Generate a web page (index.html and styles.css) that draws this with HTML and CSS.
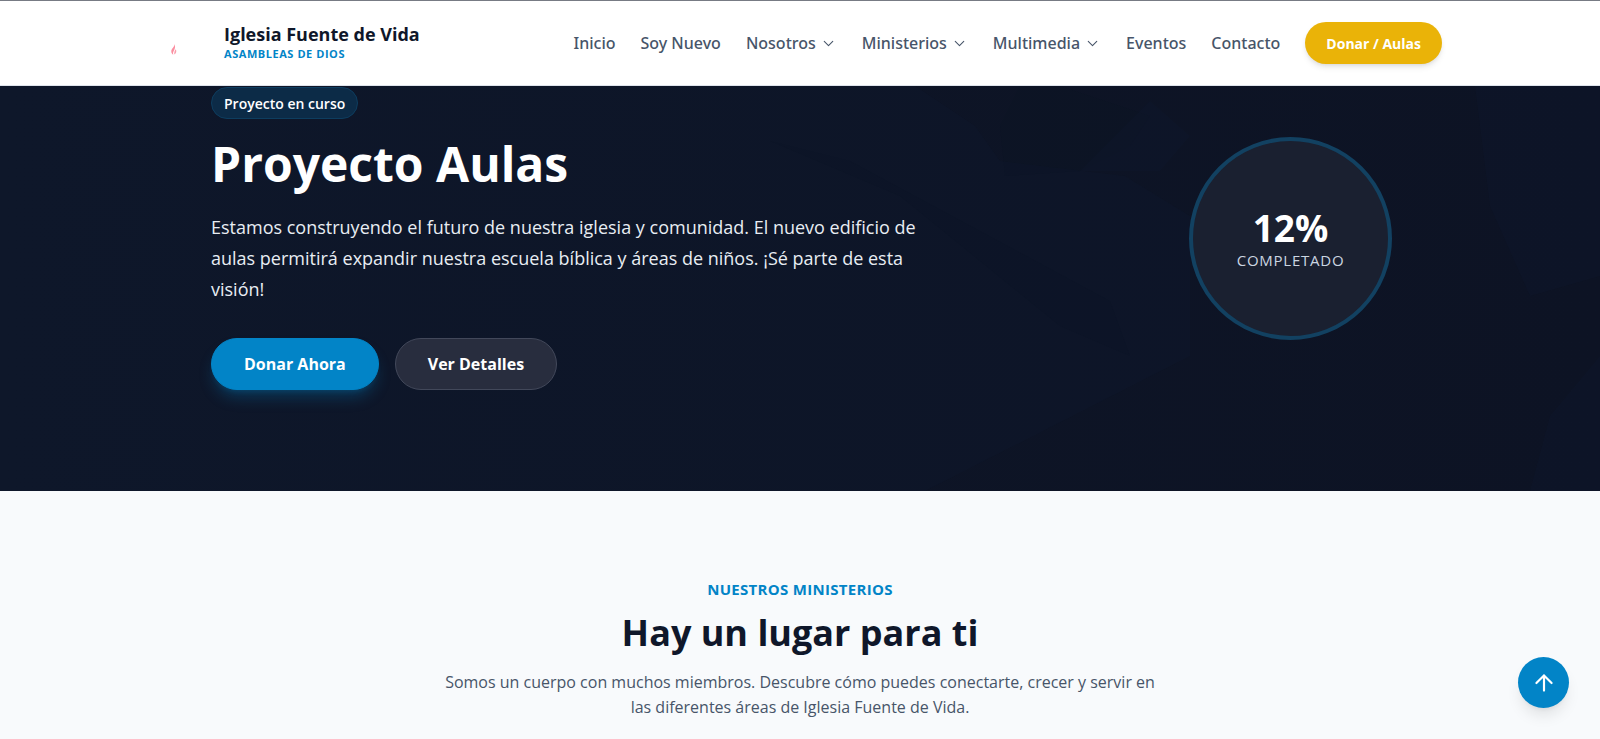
FILE: index.html
```html
<!DOCTYPE html>
<html lang="es">
<head>
<meta charset="utf-8">
<meta name="viewport" content="width=device-width, initial-scale=1">
<title>Iglesia Fuente de Vida</title>
<link rel="stylesheet" href="styles.css">
</head>
<body>
<header class="site-header">
  <div class="header-inner">
    <a class="brand" href="#">
      <svg class="brand-mark" viewBox="0 0 52 52" aria-hidden="true">
        <path d="M16.500 27c.5 2.800-3.400 4.600-3.200 7.500.1 1.700 1 2.800 2 3.200-.7-1.700-.1-3 .7-4.300 1.200-2 1.400-4.500.5-6.400z" fill="#fb8ea0"/>
        <path d="M17.600 32.200c1.300 1.500.9 4.300-1.400 5.300.3-1.800-.3-2.600 1.400-5.300z" fill="#fb9dac"/>
      </svg>
      <span class="brand-text">
        <span class="brand-name">Iglesia Fuente de Vida</span>
        <span class="brand-sub">ASAMBLEAS DE DIOS</span>
      </span>
    </a>
    <nav class="nav" aria-label="Principal">
      <a class="nav-link" href="#">Inicio</a>
      <a class="nav-link" href="#">Soy Nuevo</a>
      <button class="nav-link" type="button">Nosotros <svg class="chevron" viewBox="0 0 24 24" aria-hidden="true"><path d="m6 9 6 6 6-6"/></svg></button>
      <button class="nav-link" type="button">Ministerios <svg class="chevron" viewBox="0 0 24 24" aria-hidden="true"><path d="m6 9 6 6 6-6"/></svg></button>
      <button class="nav-link" type="button">Multimedia <svg class="chevron" viewBox="0 0 24 24" aria-hidden="true"><path d="m6 9 6 6 6-6"/></svg></button>
      <a class="nav-link" href="#">Eventos</a>
      <a class="nav-link" href="#">Contacto</a>
      <a class="donate" href="#">Donar / Aulas</a>
    </nav>
  </div>
</header>
<main>
  <section class="hero">
    <svg class="hero-art" viewBox="0 0 1600 405" preserveAspectRatio="xMidYMid slice" aria-hidden="true">
      <path class="art-light" d="M0 0H915L975 40L1000 75L1125 90L1190 130V270L925 405H0Z"/>
      <path class="art-dark" d="M770 55L850 75L1110 215L1130 270L1060 240L900 110Z"/>
      <path class="art-dark" d="M1000 40L1020 0H1060L1150 30L1130 60L1080 85L1005 90Z"/>
      <path class="art-light" d="M1080 85L1150 15L1190 50L1160 85Z"/>
      <path class="art-light" d="M1475 0H1600V190L1530 210L1490 120Z"/>
      <path class="art-light" d="M1600 270L1550 330L1530 405H1600Z"/>
    </svg>
    <div class="hero-inner">
      <div class="hero-copy">
        <span class="badge">Proyecto en curso</span>
        <h1 class="hero-title">Proyecto Aulas</h1>
        <p class="hero-text">Estamos construyendo el futuro de nuestra iglesia y comunidad. El nuevo edificio de aulas permitirá expandir nuestra escuela bíblica y áreas de niños. ¡Sé parte de esta visión!</p>
        <div class="actions">
          <a class="btn btn-primary" href="#">Donar Ahora</a>
          <a class="btn btn-ghost" href="#">Ver Detalles</a>
        </div>
      </div>
      <div class="progress">
        <span class="progress-value">12%</span>
        <span class="progress-label">COMPLETADO</span>
      </div>
    </div>
  </section>
  <section class="ministries">
    <p class="eyebrow">NUESTROS MINISTERIOS</p>
    <h2 class="section-title">Hay un lugar para ti</h2>
    <p class="section-text">Somos un cuerpo con muchos miembros. Descubre cómo puedes conectarte, crecer y servir en las diferentes áreas de Iglesia Fuente de Vida.</p>
  </section>
</main>
<button class="to-top" type="button" aria-label="Volver arriba">
  <svg class="to-top-icon" viewBox="0 0 24 24" aria-hidden="true"><path d="m5 12 7-7 7 7M12 19V5"/></svg>
</button>
</body>
</html>
```
FILE: styles.css
```css
*, *::before, *::after { box-sizing: border-box; }

body {
  margin: 0;
  background: #f8fafc;
  color: #0f172a;
  font-family: "Open Sans", "Noto Sans", sans-serif;
}

h1, h2, p { margin: 0; }
a { color: inherit; text-decoration: none; }
button { border: 0; background: none; padding: 0; font: inherit; cursor: pointer; }

.site-header {
  background: #fff;
  border-top: 1px solid #777b84;
  border-bottom: 1px solid #dfe4ec;
}

.header-inner {
  display: flex;
  align-items: center;
  justify-content: space-between;
  max-width: 1284px;
  min-height: 84px;
  margin: 0 auto;
}

.brand { display: flex; align-items: center; gap: 14px; }
.brand-mark { width: 52px; height: 52px; }
.brand-text { display: flex; flex-direction: column; padding-bottom: 3px; }
.brand-name { font-size: 18px; font-weight: 700; line-height: 24px; }
.brand-sub {
  color: #0284c7;
  font-size: 11px;
  font-weight: 700;
  letter-spacing: 0.05em;
  line-height: 16px;
}

.nav { display: flex; align-items: center; gap: 25px; }
.nav-link {
  display: flex;
  align-items: center;
  gap: 4px;
  color: #475569;
  font-family: "Noto Sans", "Open Sans", sans-serif;
  font-size: 16px;
  font-weight: 500;
  line-height: 24px;
}

.chevron {
  width: 17px;
  height: 17px;
  fill: none;
  stroke: currentColor;
  stroke-width: 1.5;
  stroke-linecap: round;
  stroke-linejoin: round;
}

.donate {
  padding: 11px 21px 9px;
  border-radius: 999px;
  background: #eab308;
  box-shadow: 0 4px 6px -1px rgba(0, 0, 0, 0.1), 0 2px 4px -2px rgba(0, 0, 0, 0.1);
  color: #fff;
  font-size: 14px;
  font-weight: 700;
  line-height: 22px;
}

.hero {
  position: relative;
  overflow: hidden;
  background: linear-gradient(90deg, #0e1628, #0d1324);
  color: #fff;
}

.hero-art { position: absolute; inset: 0; width: 100%; height: 100%; }
.art-light { fill: #11203a; opacity: 0.16; }
.art-dark { fill: #0c1222; opacity: 0.2; }

.hero-inner {
  position: relative;
  display: flex;
  align-items: center;
  justify-content: space-between;
  gap: 48px;
  max-width: 1284px;
  margin: 0 auto;
  padding: 1px 50px 101px 53px;
}

.hero-copy { max-width: 720px; }

.badge {
  display: inline-block;
  padding: 5px 12px 3px;
  border: 1px solid #0d3d5f;
  border-radius: 999px;
  background: #0c2b47;
  font-size: 14px;
  font-weight: 600;
  line-height: 22px;
}

.hero-title {
  margin-top: 19px;
  font-size: 48px;
  font-weight: 700;
  line-height: 52px;
}

.hero-text {
  margin-top: 22px;
  color: #e8edf3;
  font-size: 18px;
  line-height: 31px;
}

.actions { display: flex; gap: 16px; margin-top: 33px; }

.btn {
  padding: 14px 32px;
  border: 1px solid transparent;
  border-radius: 999px;
  font-size: 16px;
  font-weight: 700;
  line-height: 22px;
}
.btn-primary {
  border-color: #0284c7;
  background: #0284c7;
  box-shadow: 0 10px 15px -3px rgba(2, 132, 199, 0.3), 0 4px 6px -4px rgba(2, 132, 199, 0.3);
}
.btn-ghost { border-color: #42485a; background: #282d3e; }

.progress {
  display: flex;
  flex: none;
  flex-direction: column;
  align-items: center;
  justify-content: center;
  width: 203px;
  height: 203px;
  padding-top: 3px;
  border: 4px solid #124161;
  border-radius: 50%;
  background: #1a2030;
}
.progress-value { font-size: 37px; font-weight: 700; line-height: 40px; }
.progress-label {
  color: #cbd5e1;
  font-size: 15px;
  letter-spacing: 0.05em;
  line-height: 24px;
}

.ministries {
  padding: 86px 24px 20px;
  text-align: center;
}
.eyebrow {
  color: #0284c7;
  font-size: 15px;
  font-weight: 700;
  letter-spacing: 0.02em;
  line-height: 24px;
}
.section-title {
  margin-top: 10px;
  font-size: 36px;
  font-weight: 700;
  line-height: 44px;
}
.section-text {
  max-width: 720px;
  margin: 15px auto 0;
  color: #475569;
  font-size: 16px;
  line-height: 25px;
}

.to-top {
  position: fixed;
  right: 31px;
  bottom: 31px;
  display: grid;
  place-items: center;
  width: 51px;
  height: 51px;
  border-radius: 50%;
  background: #0284c7;
  box-shadow: 0 10px 15px -3px rgba(0, 0, 0, 0.1), 0 4px 6px -4px rgba(0, 0, 0, 0.1);
  color: #fff;
}
.to-top-icon {
  width: 26px;
  height: 26px;
  fill: none;
  stroke: currentColor;
  stroke-width: 2;
  stroke-linecap: round;
  stroke-linejoin: round;
}
```
